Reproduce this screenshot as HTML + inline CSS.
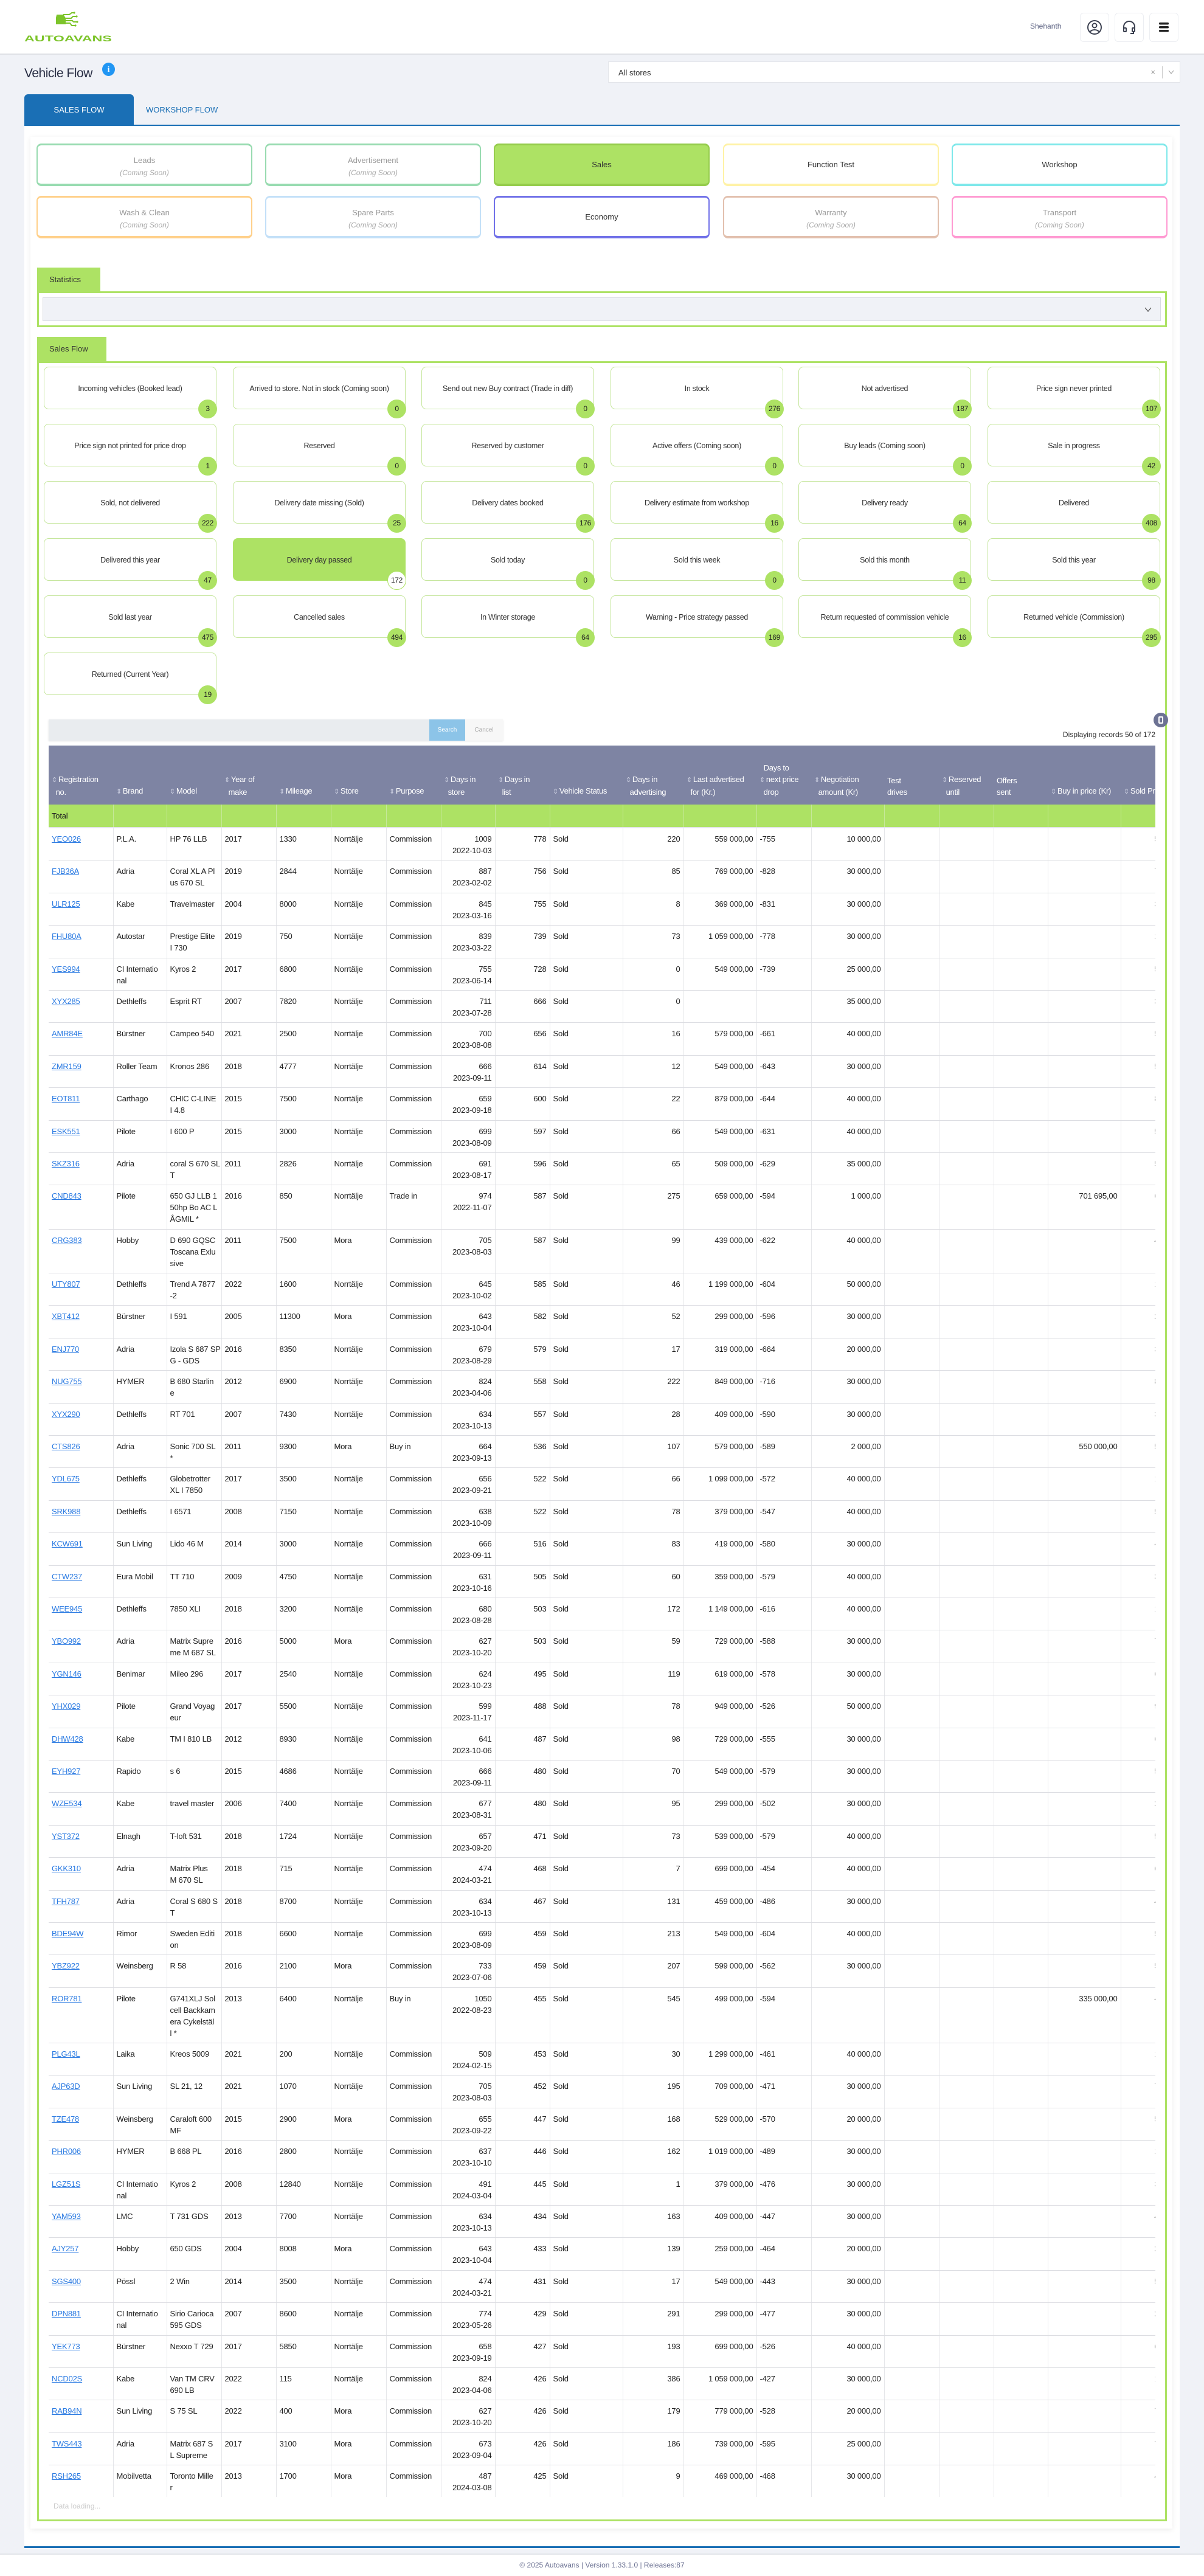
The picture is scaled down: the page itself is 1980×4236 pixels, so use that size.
<!DOCTYPE html>
<html><head><meta charset="utf-8">
<style>
*{box-sizing:border-box;margin:0;padding:0}
body{width:1980px;height:4236px;background:#f0f2f7;font-family:"Liberation Sans",sans-serif;color:#333;position:relative;overflow:hidden}
.abs{position:absolute}
#hdr{left:0;top:0;width:1980px;height:90px;background:#fff;border-bottom:2px solid #dfe1e6}
.ib{position:absolute;top:21px;width:48px;height:48px;border:1px solid #eceef2;border-radius:6px;background:#fff;display:flex;align-items:center;justify-content:center}
.card{position:absolute;width:355px;height:70px;border:2px solid;border-top-width:3px;border-bottom-width:4px;border-radius:8px;background:#fff;text-align:center;font-size:13px}
.card .t{margin-top:17px;color:#999}
.card .s{font-style:italic;color:#aaa;font-size:12px;margin-top:6px}
.card.one .t{margin-top:24px;color:#333}
.tile{position:absolute;width:284px;height:70px;border:1px solid #c5e69c;border-radius:8px;background:#fff;font-size:12.5px;color:#333;text-align:center;line-height:70px;letter-spacing:-0.3px}
.tile.on{background:#ade264;border-color:#ade264}
.bd{position:absolute;right:-2px;bottom:-16px;width:31px;height:31px;border-radius:50%;background:#ade264;font-size:12px;line-height:31px;text-align:center;color:#222}
.tile.on .bd{background:#fff;border:1px solid #ade264;line-height:29px}
table{border-collapse:collapse;table-layout:fixed;width:1890px;font-size:13px}
th{background:#7e84a3;color:#fff;font-weight:normal;text-align:left;vertical-align:bottom;padding:0 5px 11px;line-height:19px;height:97px;white-space:nowrap;overflow:hidden;letter-spacing:-0.3px}
th i{font-style:normal;color:#cdd0e2;font-size:11px;margin-right:2px}
td{padding:8px 5px 6.4px;line-height:19px;vertical-align:top;border-bottom:1px solid #dcdde2;border-right:1px solid #e6e7ea;white-space:nowrap;overflow:hidden;color:#222;letter-spacing:-0.2px}
td.r{text-align:right}
td a{color:#2a7ae2;text-decoration:underline}
tr.tot td{background:#ade264;height:35px;padding:9px 5px;border-bottom:2px solid #e3e4e8;border-right:1px solid #c6e89a}
td.l{padding-left:55px}
</style></head><body>

<div id="hdr" class="abs">
 <svg class="abs" style="left:90px;top:19px" width="42" height="28" viewBox="0 0 42 28"><g fill="none" stroke="#7cc42a" stroke-width="2"><path d="M4 6h10l3 5v9H3V10z" fill="#7cc42a"/><path d="M14 5h10l4-3h4M17 11h10l3-3h5M17 15h12l2 2h5M17 19h8l3 4h5"/></g><circle cx="32" cy="2" r="1.6" fill="#7cc42a"/><circle cx="36" cy="8" r="1.6" fill="#7cc42a"/><circle cx="37" cy="17" r="1.6" fill="#7cc42a"/><circle cx="34" cy="23" r="1.6" fill="#7cc42a"/></svg>
 <svg class="abs" style="left:40px;top:55px" width="146" height="15"><text x="0" y="13" font-family="Liberation Sans" font-weight="bold" font-size="14" fill="#7cc42a" textLength="144" lengthAdjust="spacingAndGlyphs">AUTOAVANS</text></svg>
 <div class="abs" style="left:1694px;top:36px;font-size:12px;color:#5a6080">Shehanth</div>
 <div class="ib" style="left:1776px"><svg width="26" height="26" viewBox="0 0 26 26" fill="none" stroke="#3b4050" stroke-width="2"><circle cx="13" cy="13" r="11"/><circle cx="13" cy="10" r="3.5"/><path d="M6 20c3-4 11-4 14 0"/></svg></div>
 <div class="ib" style="left:1833px"><svg width="26" height="26" viewBox="0 0 26 26" fill="none" stroke="#3b4050" stroke-width="2"><path d="M4 16v-4a9 9 0 0 1 18 0v4"/><rect x="4" y="14" width="4" height="6" rx="1"/><rect x="18" y="14" width="4" height="6" rx="1"/><path d="M20 20v3h-5"/></svg></div>
 <div class="ib" style="left:1890px"><svg width="20" height="18" viewBox="0 0 20 18" fill="#222"><rect x="2" y="1" width="16" height="3.5" rx="1.5"/><rect x="2" y="7" width="16" height="3.5" rx="1.5"/><rect x="2" y="13" width="16" height="3.5" rx="1.5"/></svg></div>
</div>

<div class="abs" style="left:40px;top:109px;font-size:21px;color:#2a2f45;letter-spacing:-0.5px">Vehicle Flow</div>
<div class="abs" style="left:168px;top:103px;width:21px;height:22px;border-radius:50%;background:#2196f3;color:#fff;font-size:13px;font-weight:bold;text-align:center;line-height:22px;font-family:'Liberation Serif',serif">i</div>
<div class="abs" style="left:1000px;top:101px;width:941px;height:35px;background:#fff;border:1px solid #e3e5ea;font-size:13px;color:#333;padding:10px 16px">All stores<span class="abs" style="right:40px;top:9px;color:#999">×</span><span class="abs" style="right:28px;top:7px;height:20px;border-left:1px solid #ccc"></span><svg class="abs" style="right:9px;top:13px" width="10" height="7" viewBox="0 0 10 7" fill="none" stroke="#aaa" stroke-width="1.2"><path d="M1 1l4 5 4-5"/></svg></div>

<div class="abs" style="left:40px;top:155px;width:180px;height:51px;background:#1a6fb5;border-radius:6px 6px 0 0;color:#fff;font-size:13px;text-align:center;line-height:51px">SALES FLOW</div>
<div class="abs" style="left:240px;top:155px;height:51px;color:#1a6fb5;font-size:13px;line-height:51px">WORKSHOP FLOW</div>

<div class="abs" style="left:40px;top:205px;width:1900px;height:3985px;background:#fff;border-top:2px solid #1a6fb5;border-bottom:3px solid #1a6fb5"></div>
<div class="abs" style="left:50px;top:225px;width:1878px;height:3933px;background:#fff;box-shadow:0 2px 8px rgba(0,0,0,0.08)"></div>

<div class="card" style="left:60px;top:236px;border-color:#98dbb0"><div class="t">Leads</div><div class="s">(Coming Soon)</div></div>
<div class="card" style="left:436px;top:236px;border-color:#98dbb0"><div class="t">Advertisement</div><div class="s">(Coming Soon)</div></div>
<div class="card one" style="left:812px;top:236px;border-color:#95cc4c;background:#ade264"><div class="t">Sales</div></div>
<div class="card one" style="left:1189px;top:236px;border-color:#fff2a6"><div class="t">Function Test</div></div>
<div class="card one" style="left:1565px;top:236px;border-color:#7ee8ea"><div class="t">Workshop</div></div>
<div class="card" style="left:60px;top:322px;border-color:#ffd08a"><div class="t">Wash &amp; Clean</div><div class="s">(Coming Soon)</div></div>
<div class="card" style="left:436px;top:322px;border-color:#c3e0f8"><div class="t">Spare Parts</div><div class="s">(Coming Soon)</div></div>
<div class="card one" style="left:812px;top:322px;border-color:#7070e8"><div class="t">Economy</div></div>
<div class="card" style="left:1189px;top:322px;border-color:#e2c0ae"><div class="t">Warranty</div><div class="s">(Coming Soon)</div></div>
<div class="card" style="left:1565px;top:322px;border-color:#ff9ad2"><div class="t">Transport</div><div class="s">(Coming Soon)</div></div>

<div class="abs" style="left:61px;top:440px;width:104px;height:40px;background:#ade264;font-size:13px;line-height:40px;padding-left:20px;color:#333">Statistics</div>
<div class="abs" style="left:61px;top:479px;width:1858px;height:59px;border:3px solid #ade264"></div>
<div class="abs" style="left:70px;top:489px;width:1839px;height:39px;background:#f0f2f7;border:1px solid #d8dbe2"><svg class="abs" style="right:14px;top:15px" width="12" height="8" viewBox="0 0 12 8" fill="none" stroke="#555" stroke-width="1.3"><path d="M1 1l5 6 5-6"/></svg></div>

<div class="abs" style="left:61px;top:554px;width:114px;height:41px;background:#ade264;font-size:13px;line-height:40px;padding-left:20px;color:#333">Sales Flow</div>
<div class="abs" style="left:61px;top:594px;width:1858px;height:3552px;border:3px solid #ade264"></div>

<div class="tile" style="left:72px;top:603px">Incoming vehicles (Booked lead)<div class="bd">3</div></div>
<div class="tile" style="left:383px;top:603px">Arrived to store. Not in stock (Coming soon)<div class="bd">0</div></div>
<div class="tile" style="left:693px;top:603px">Send out new Buy contract (Trade in diff)<div class="bd">0</div></div>
<div class="tile" style="left:1004px;top:603px">In stock<div class="bd">276</div></div>
<div class="tile" style="left:1313px;top:603px">Not advertised<div class="bd">187</div></div>
<div class="tile" style="left:1624px;top:603px">Price sign never printed<div class="bd">107</div></div>
<div class="tile" style="left:72px;top:697px">Price sign not printed for price drop<div class="bd">1</div></div>
<div class="tile" style="left:383px;top:697px">Reserved<div class="bd">0</div></div>
<div class="tile" style="left:693px;top:697px">Reserved by customer<div class="bd">0</div></div>
<div class="tile" style="left:1004px;top:697px">Active offers (Coming soon)<div class="bd">0</div></div>
<div class="tile" style="left:1313px;top:697px">Buy leads (Coming soon)<div class="bd">0</div></div>
<div class="tile" style="left:1624px;top:697px">Sale in progress<div class="bd">42</div></div>
<div class="tile" style="left:72px;top:791px">Sold, not delivered<div class="bd">222</div></div>
<div class="tile" style="left:383px;top:791px">Delivery date missing (Sold)<div class="bd">25</div></div>
<div class="tile" style="left:693px;top:791px">Delivery dates booked<div class="bd">176</div></div>
<div class="tile" style="left:1004px;top:791px">Delivery estimate from workshop<div class="bd">16</div></div>
<div class="tile" style="left:1313px;top:791px">Delivery ready<div class="bd">64</div></div>
<div class="tile" style="left:1624px;top:791px">Delivered<div class="bd">408</div></div>
<div class="tile" style="left:72px;top:885px">Delivered this year<div class="bd">47</div></div>
<div class="tile on" style="left:383px;top:885px">Delivery day passed<div class="bd">172</div></div>
<div class="tile" style="left:693px;top:885px">Sold today<div class="bd">0</div></div>
<div class="tile" style="left:1004px;top:885px">Sold this week<div class="bd">0</div></div>
<div class="tile" style="left:1313px;top:885px">Sold this month<div class="bd">11</div></div>
<div class="tile" style="left:1624px;top:885px">Sold this year<div class="bd">98</div></div>
<div class="tile" style="left:72px;top:979px">Sold last year<div class="bd">475</div></div>
<div class="tile" style="left:383px;top:979px">Cancelled sales<div class="bd">494</div></div>
<div class="tile" style="left:693px;top:979px">In Winter storage<div class="bd">64</div></div>
<div class="tile" style="left:1004px;top:979px">Warning - Price strategy passed<div class="bd">169</div></div>
<div class="tile" style="left:1313px;top:979px">Return requested of commission vehicle<div class="bd">16</div></div>
<div class="tile" style="left:1624px;top:979px">Returned vehicle (Commission)<div class="bd">295</div></div>
<div class="tile" style="left:72px;top:1073px">Returned (Current Year)<div class="bd">19</div></div>

<div class="abs" style="left:80px;top:1183px;width:747px;height:35px;background:#e9ecef;box-shadow:0 1px 3px rgba(0,0,0,0.1)"></div>
<div class="abs" style="left:706px;top:1183px;width:59px;height:35px;background:#8cc4e8;color:#fff;font-size:10px;text-align:center;line-height:35px">Search</div>
<div class="abs" style="left:765px;top:1183px;width:62px;height:35px;background:#f7f7f7;color:#aaa;font-size:10px;text-align:center;line-height:35px">Cancel</div>
<div class="abs" style="left:1897px;top:1172px;width:24px;height:24px;border-radius:50%;background:#6c7293"><div class="abs" style="left:8px;top:6px;width:8px;height:12px;border:2px solid #fff;border-radius:2px"></div></div>
<div class="abs" style="left:1600px;top:1201px;width:300px;text-align:right;font-size:12px;color:#333">Displaying records 50 of 172</div>

<div class="abs" style="left:80px;top:1226px;width:1820px;height:2880px;overflow:hidden">
<table>
<colgroup><col style="width:106px"><col style="width:88px"><col style="width:90px"><col style="width:90px"><col style="width:90px"><col style="width:91px"><col style="width:90px"><col style="width:89px"><col style="width:90px"><col style="width:120px"><col style="width:100px"><col style="width:120px"><col style="width:90px"><col style="width:120px"><col style="width:90px"><col style="width:90px"><col style="width:89px"><col style="width:120px"><col style="width:127px"></colgroup>
<tr><th><i>⇕</i>Registration<br>&nbsp;&nbsp;no.</th><th><i>⇕</i>Brand</th><th><i>⇕</i>Model</th><th><i>⇕</i>Year of<br>&nbsp;&nbsp;make</th><th><i>⇕</i>Mileage</th><th><i>⇕</i>Store</th><th><i>⇕</i>Purpose</th><th><i>⇕</i>Days in<br>&nbsp;&nbsp;store</th><th><i>⇕</i>Days in<br>&nbsp;&nbsp;list</th><th><i>⇕</i>Vehicle Status</th><th><i>⇕</i>Days in<br>&nbsp;&nbsp;advertising</th><th><i>⇕</i>Last advertised<br>&nbsp;&nbsp;for (Kr.)</th><th>&nbsp;&nbsp;Days to<br><i>⇕</i>next price<br>&nbsp;&nbsp;drop</th><th><i>⇕</i>Negotiation<br>&nbsp;&nbsp;amount (Kr)</th><th>Test<br>drives</th><th><i>⇕</i>Reserved<br>&nbsp;&nbsp;until</th><th>Offers<br>sent</th><th><i>⇕</i>Buy in price (Kr)</th><th><i>⇕</i>Sold Price (Kr)</th></tr>
<tr class="tot"><td>Total</td><td></td><td></td><td></td><td></td><td></td><td></td><td></td><td></td><td></td><td></td><td></td><td></td><td></td><td></td><td></td><td></td><td></td><td></td></tr>
<tr><td><a>YEO026</a></td><td>P.L.A.</td><td>HP 76 LLB</td><td>2017</td><td>1330</td><td>Norrtälje</td><td>Commission</td><td class="r">1009<br>2022-10-03</td><td class="r">778</td><td>Sold</td><td class="r">220</td><td class="r">559 000,00</td><td>-755</td><td class="r">10 000,00</td><td></td><td></td><td></td><td></td><td class="l">559 000,00</td></tr>
<tr><td><a>FJB36A</a></td><td>Adria</td><td>Coral XL A Pl<br>us 670 SL</td><td>2019</td><td>2844</td><td>Norrtälje</td><td>Commission</td><td class="r">887<br>2023-02-02</td><td class="r">756</td><td>Sold</td><td class="r">85</td><td class="r">769 000,00</td><td>-828</td><td class="r">30 000,00</td><td></td><td></td><td></td><td></td><td class="l">769 000,00</td></tr>
<tr><td><a>ULR125</a></td><td>Kabe</td><td>Travelmaster</td><td>2004</td><td>8000</td><td>Norrtälje</td><td>Commission</td><td class="r">845<br>2023-03-16</td><td class="r">755</td><td>Sold</td><td class="r">8</td><td class="r">369 000,00</td><td>-831</td><td class="r">30 000,00</td><td></td><td></td><td></td><td></td><td class="l">369 000,00</td></tr>
<tr><td><a>FHU80A</a></td><td>Autostar</td><td>Prestige Elite<br>I 730</td><td>2019</td><td>750</td><td>Norrtälje</td><td>Commission</td><td class="r">839<br>2023-03-22</td><td class="r">739</td><td>Sold</td><td class="r">73</td><td class="r">1 059 000,00</td><td>-778</td><td class="r">30 000,00</td><td></td><td></td><td></td><td></td><td class="l">10 59 000,00</td></tr>
<tr><td><a>YES994</a></td><td>CI Internatio<br>nal</td><td>Kyros 2</td><td>2017</td><td>6800</td><td>Norrtälje</td><td>Commission</td><td class="r">755<br>2023-06-14</td><td class="r">728</td><td>Sold</td><td class="r">0</td><td class="r">549 000,00</td><td>-739</td><td class="r">25 000,00</td><td></td><td></td><td></td><td></td><td class="l">549 000,00</td></tr>
<tr><td><a>XYX285</a></td><td>Dethleffs</td><td>Esprit RT</td><td>2007</td><td>7820</td><td>Norrtälje</td><td>Commission</td><td class="r">711<br>2023-07-28</td><td class="r">666</td><td>Sold</td><td class="r">0</td><td class="r"></td><td></td><td class="r">35 000,00</td><td></td><td></td><td></td><td></td><td class="l">329 000,00</td></tr>
<tr><td><a>AMR84E</a></td><td>Bürstner</td><td>Campeo 540</td><td>2021</td><td>2500</td><td>Norrtälje</td><td>Commission</td><td class="r">700<br>2023-08-08</td><td class="r">656</td><td>Sold</td><td class="r">16</td><td class="r">579 000,00</td><td>-661</td><td class="r">40 000,00</td><td></td><td></td><td></td><td></td><td class="l">579 000,00</td></tr>
<tr><td><a>ZMR159</a></td><td>Roller Team</td><td>Kronos 286</td><td>2018</td><td>4777</td><td>Norrtälje</td><td>Commission</td><td class="r">666<br>2023-09-11</td><td class="r">614</td><td>Sold</td><td class="r">12</td><td class="r">549 000,00</td><td>-643</td><td class="r">30 000,00</td><td></td><td></td><td></td><td></td><td class="l">549 000,00</td></tr>
<tr><td><a>EOT811</a></td><td>Carthago</td><td>CHIC C-LINE<br>I 4.8</td><td>2015</td><td>7500</td><td>Norrtälje</td><td>Commission</td><td class="r">659<br>2023-09-18</td><td class="r">600</td><td>Sold</td><td class="r">22</td><td class="r">879 000,00</td><td>-644</td><td class="r">40 000,00</td><td></td><td></td><td></td><td></td><td class="l">879 000,00</td></tr>
<tr><td><a>ESK551</a></td><td>Pilote</td><td>I 600 P</td><td>2015</td><td>3000</td><td>Norrtälje</td><td>Commission</td><td class="r">699<br>2023-08-09</td><td class="r">597</td><td>Sold</td><td class="r">66</td><td class="r">549 000,00</td><td>-631</td><td class="r">40 000,00</td><td></td><td></td><td></td><td></td><td class="l">549 000,00</td></tr>
<tr><td><a>SKZ316</a></td><td>Adria</td><td>coral S 670 SL<br>T</td><td>2011</td><td>2826</td><td>Norrtälje</td><td>Commission</td><td class="r">691<br>2023-08-17</td><td class="r">596</td><td>Sold</td><td class="r">65</td><td class="r">509 000,00</td><td>-629</td><td class="r">35 000,00</td><td></td><td></td><td></td><td></td><td class="l">509 000,00</td></tr>
<tr><td><a>CND843</a></td><td>Pilote</td><td>650 GJ LLB 1<br>50hp Bo AC L<br>ÅGMIL *</td><td>2016</td><td>850</td><td>Norrtälje</td><td>Trade in</td><td class="r">974<br>2022-11-07</td><td class="r">587</td><td>Sold</td><td class="r">275</td><td class="r">659 000,00</td><td>-594</td><td class="r">1 000,00</td><td></td><td></td><td></td><td class="r">701 695,00</td><td class="l">659 000,00</td></tr>
<tr><td><a>CRG383</a></td><td>Hobby</td><td>D 690 GQSC<br>Toscana Exlu<br>sive</td><td>2011</td><td>7500</td><td>Mora</td><td>Commission</td><td class="r">705<br>2023-08-03</td><td class="r">587</td><td>Sold</td><td class="r">99</td><td class="r">439 000,00</td><td>-622</td><td class="r">40 000,00</td><td></td><td></td><td></td><td></td><td class="l">439 000,00</td></tr>
<tr><td><a>UTY807</a></td><td>Dethleffs</td><td>Trend A 7877<br>-2</td><td>2022</td><td>1600</td><td>Norrtälje</td><td>Commission</td><td class="r">645<br>2023-10-02</td><td class="r">585</td><td>Sold</td><td class="r">46</td><td class="r">1 199 000,00</td><td>-604</td><td class="r">50 000,00</td><td></td><td></td><td></td><td></td><td class="l">11 99 000,00</td></tr>
<tr><td><a>XBT412</a></td><td>Bürstner</td><td>I 591</td><td>2005</td><td>11300</td><td>Mora</td><td>Commission</td><td class="r">643<br>2023-10-04</td><td class="r">582</td><td>Sold</td><td class="r">52</td><td class="r">299 000,00</td><td>-596</td><td class="r">30 000,00</td><td></td><td></td><td></td><td></td><td class="l">299 000,00</td></tr>
<tr><td><a>ENJ770</a></td><td>Adria</td><td>Izola S 687 SP<br>G - GDS</td><td>2016</td><td>8350</td><td>Norrtälje</td><td>Commission</td><td class="r">679<br>2023-08-29</td><td class="r">579</td><td>Sold</td><td class="r">17</td><td class="r">319 000,00</td><td>-664</td><td class="r">20 000,00</td><td></td><td></td><td></td><td></td><td class="l">319 000,00</td></tr>
<tr><td><a>NUG755</a></td><td>HYMER</td><td>B 680 Starlin<br>e</td><td>2012</td><td>6900</td><td>Norrtälje</td><td>Commission</td><td class="r">824<br>2023-04-06</td><td class="r">558</td><td>Sold</td><td class="r">222</td><td class="r">849 000,00</td><td>-716</td><td class="r">30 000,00</td><td></td><td></td><td></td><td></td><td class="l">849 000,00</td></tr>
<tr><td><a>XYX290</a></td><td>Dethleffs</td><td>RT 701</td><td>2007</td><td>7430</td><td>Norrtälje</td><td>Commission</td><td class="r">634<br>2023-10-13</td><td class="r">557</td><td>Sold</td><td class="r">28</td><td class="r">409 000,00</td><td>-590</td><td class="r">30 000,00</td><td></td><td></td><td></td><td></td><td class="l">379 000,00</td></tr>
<tr><td><a>CTS826</a></td><td>Adria</td><td>Sonic 700 SL<br>*</td><td>2011</td><td>9300</td><td>Mora</td><td>Buy in</td><td class="r">664<br>2023-09-13</td><td class="r">536</td><td>Sold</td><td class="r">107</td><td class="r">579 000,00</td><td>-589</td><td class="r">2 000,00</td><td></td><td></td><td></td><td class="r">550 000,00</td><td class="l">579 000,00</td></tr>
<tr><td><a>YDL675</a></td><td>Dethleffs</td><td>Globetrotter<br>XL I 7850</td><td>2017</td><td>3500</td><td>Norrtälje</td><td>Commission</td><td class="r">656<br>2023-09-21</td><td class="r">522</td><td>Sold</td><td class="r">66</td><td class="r">1 099 000,00</td><td>-572</td><td class="r">40 000,00</td><td></td><td></td><td></td><td></td><td class="l">10 99 000,00</td></tr>
<tr><td><a>SRK988</a></td><td>Dethleffs</td><td>I 6571</td><td>2008</td><td>7150</td><td>Norrtälje</td><td>Commission</td><td class="r">638<br>2023-10-09</td><td class="r">522</td><td>Sold</td><td class="r">78</td><td class="r">379 000,00</td><td>-547</td><td class="r">40 000,00</td><td></td><td></td><td></td><td></td><td class="l">579 000,00</td></tr>
<tr><td><a>KCW691</a></td><td>Sun Living</td><td>Lido 46 M</td><td>2014</td><td>3000</td><td>Norrtälje</td><td>Commission</td><td class="r">666<br>2023-09-11</td><td class="r">516</td><td>Sold</td><td class="r">83</td><td class="r">419 000,00</td><td>-580</td><td class="r">30 000,00</td><td></td><td></td><td></td><td></td><td class="l">419 000,00</td></tr>
<tr><td><a>CTW237</a></td><td>Eura Mobil</td><td>TT 710</td><td>2009</td><td>4750</td><td>Norrtälje</td><td>Commission</td><td class="r">631<br>2023-10-16</td><td class="r">505</td><td>Sold</td><td class="r">60</td><td class="r">359 000,00</td><td>-579</td><td class="r">40 000,00</td><td></td><td></td><td></td><td></td><td class="l">359 000,00</td></tr>
<tr><td><a>WEE945</a></td><td>Dethleffs</td><td>7850 XLI</td><td>2018</td><td>3200</td><td>Norrtälje</td><td>Commission</td><td class="r">680<br>2023-08-28</td><td class="r">503</td><td>Sold</td><td class="r">172</td><td class="r">1 149 000,00</td><td>-616</td><td class="r">40 000,00</td><td></td><td></td><td></td><td></td><td class="l">11 49 000,00</td></tr>
<tr><td><a>YBO992</a></td><td>Adria</td><td>Matrix Supre<br>me M 687 SL</td><td>2016</td><td>5000</td><td>Mora</td><td>Commission</td><td class="r">627<br>2023-10-20</td><td class="r">503</td><td>Sold</td><td class="r">59</td><td class="r">729 000,00</td><td>-588</td><td class="r">30 000,00</td><td></td><td></td><td></td><td></td><td class="l">729 000,00</td></tr>
<tr><td><a>YGN146</a></td><td>Benimar</td><td>Mileo 296</td><td>2017</td><td>2540</td><td>Norrtälje</td><td>Commission</td><td class="r">624<br>2023-10-23</td><td class="r">495</td><td>Sold</td><td class="r">119</td><td class="r">619 000,00</td><td>-578</td><td class="r">30 000,00</td><td></td><td></td><td></td><td></td><td class="l">619 000,00</td></tr>
<tr><td><a>YHX029</a></td><td>Pilote</td><td>Grand Voyag<br>eur</td><td>2017</td><td>5500</td><td>Norrtälje</td><td>Commission</td><td class="r">599<br>2023-11-17</td><td class="r">488</td><td>Sold</td><td class="r">78</td><td class="r">949 000,00</td><td>-526</td><td class="r">50 000,00</td><td></td><td></td><td></td><td></td><td class="l">949 000,00</td></tr>
<tr><td><a>DHW428</a></td><td>Kabe</td><td>TM I 810 LB</td><td>2012</td><td>8930</td><td>Norrtälje</td><td>Commission</td><td class="r">641<br>2023-10-06</td><td class="r">487</td><td>Sold</td><td class="r">98</td><td class="r">729 000,00</td><td>-555</td><td class="r">30 000,00</td><td></td><td></td><td></td><td></td><td class="l">629 000,00</td></tr>
<tr><td><a>EYH927</a></td><td>Rapido</td><td>s 6</td><td>2015</td><td>4686</td><td>Norrtälje</td><td>Commission</td><td class="r">666<br>2023-09-11</td><td class="r">480</td><td>Sold</td><td class="r">70</td><td class="r">549 000,00</td><td>-579</td><td class="r">30 000,00</td><td></td><td></td><td></td><td></td><td class="l">549 000,00</td></tr>
<tr><td><a>WZE534</a></td><td>Kabe</td><td>travel master</td><td>2006</td><td>7400</td><td>Norrtälje</td><td>Commission</td><td class="r">677<br>2023-08-31</td><td class="r">480</td><td>Sold</td><td class="r">95</td><td class="r">299 000,00</td><td>-502</td><td class="r">30 000,00</td><td></td><td></td><td></td><td></td><td class="l">299 000,00</td></tr>
<tr><td><a>YST372</a></td><td>Elnagh</td><td>T-loft 531</td><td>2018</td><td>1724</td><td>Norrtälje</td><td>Commission</td><td class="r">657<br>2023-09-20</td><td class="r">471</td><td>Sold</td><td class="r">73</td><td class="r">539 000,00</td><td>-579</td><td class="r">40 000,00</td><td></td><td></td><td></td><td></td><td class="l">539 000,00</td></tr>
<tr><td><a>GKK310</a></td><td>Adria</td><td>Matrix Plus<br>M 670 SL</td><td>2018</td><td>715</td><td>Norrtälje</td><td>Commission</td><td class="r">474<br>2024-03-21</td><td class="r">468</td><td>Sold</td><td class="r">7</td><td class="r">699 000,00</td><td>-454</td><td class="r">40 000,00</td><td></td><td></td><td></td><td></td><td class="l">699 000,00</td></tr>
<tr><td><a>TFH787</a></td><td>Adria</td><td>Coral S 680 S<br>T</td><td>2018</td><td>8700</td><td>Norrtälje</td><td>Commission</td><td class="r">634<br>2023-10-13</td><td class="r">467</td><td>Sold</td><td class="r">131</td><td class="r">459 000,00</td><td>-486</td><td class="r">30 000,00</td><td></td><td></td><td></td><td></td><td class="l">459 000,00</td></tr>
<tr><td><a>BDE94W</a></td><td>Rimor</td><td>Sweden Editi<br>on</td><td>2018</td><td>6600</td><td>Norrtälje</td><td>Commission</td><td class="r">699<br>2023-08-09</td><td class="r">459</td><td>Sold</td><td class="r">213</td><td class="r">549 000,00</td><td>-604</td><td class="r">40 000,00</td><td></td><td></td><td></td><td></td><td class="l">549 000,00</td></tr>
<tr><td><a>YBZ922</a></td><td>Weinsberg</td><td>R 58</td><td>2016</td><td>2100</td><td>Mora</td><td>Commission</td><td class="r">733<br>2023-07-06</td><td class="r">459</td><td>Sold</td><td class="r">207</td><td class="r">599 000,00</td><td>-562</td><td class="r">30 000,00</td><td></td><td></td><td></td><td></td><td class="l">599 000,00</td></tr>
<tr><td><a>ROR781</a></td><td>Pilote</td><td>G741XLJ Sol<br>cell Backkam<br>era Cykelstäl<br>l *</td><td>2013</td><td>6400</td><td>Norrtälje</td><td>Buy in</td><td class="r">1050<br>2022-08-23</td><td class="r">455</td><td>Sold</td><td class="r">545</td><td class="r">499 000,00</td><td>-594</td><td class="r"></td><td></td><td></td><td></td><td class="r">335 000,00</td><td class="l">499 000,00</td></tr>
<tr><td><a>PLG43L</a></td><td>Laika</td><td>Kreos 5009</td><td>2021</td><td>200</td><td>Norrtälje</td><td>Commission</td><td class="r">509<br>2024-02-15</td><td class="r">453</td><td>Sold</td><td class="r">30</td><td class="r">1 299 000,00</td><td>-461</td><td class="r">40 000,00</td><td></td><td></td><td></td><td></td><td class="l">12 99 000,00</td></tr>
<tr><td><a>AJP63D</a></td><td>Sun Living</td><td>SL 21, 12</td><td>2021</td><td>1070</td><td>Norrtälje</td><td>Commission</td><td class="r">705<br>2023-08-03</td><td class="r">452</td><td>Sold</td><td class="r">195</td><td class="r">709 000,00</td><td>-471</td><td class="r">30 000,00</td><td></td><td></td><td></td><td></td><td class="l">709 000,00</td></tr>
<tr><td><a>TZE478</a></td><td>Weinsberg</td><td>Caraloft 600<br>MF</td><td>2015</td><td>2900</td><td>Mora</td><td>Commission</td><td class="r">655<br>2023-09-22</td><td class="r">447</td><td>Sold</td><td class="r">168</td><td class="r">529 000,00</td><td>-570</td><td class="r">20 000,00</td><td></td><td></td><td></td><td></td><td class="l">529 000,00</td></tr>
<tr><td><a>PHR006</a></td><td>HYMER</td><td>B 668 PL</td><td>2016</td><td>2800</td><td>Norrtälje</td><td>Commission</td><td class="r">637<br>2023-10-10</td><td class="r">446</td><td>Sold</td><td class="r">162</td><td class="r">1 019 000,00</td><td>-489</td><td class="r">30 000,00</td><td></td><td></td><td></td><td></td><td class="l">10 19 000,00</td></tr>
<tr><td><a>LGZ51S</a></td><td>CI Internatio<br>nal</td><td>Kyros 2</td><td>2008</td><td>12840</td><td>Norrtälje</td><td>Commission</td><td class="r">491<br>2024-03-04</td><td class="r">445</td><td>Sold</td><td class="r">1</td><td class="r">379 000,00</td><td>-476</td><td class="r">30 000,00</td><td></td><td></td><td></td><td></td><td class="l">379 000,00</td></tr>
<tr><td><a>YAM593</a></td><td>LMC</td><td>T 731 GDS</td><td>2013</td><td>7700</td><td>Norrtälje</td><td>Commission</td><td class="r">634<br>2023-10-13</td><td class="r">434</td><td>Sold</td><td class="r">163</td><td class="r">409 000,00</td><td>-447</td><td class="r">30 000,00</td><td></td><td></td><td></td><td></td><td class="l">409 000,00</td></tr>
<tr><td><a>AJY257</a></td><td>Hobby</td><td>650 GDS</td><td>2004</td><td>8008</td><td>Mora</td><td>Commission</td><td class="r">643<br>2023-10-04</td><td class="r">433</td><td>Sold</td><td class="r">139</td><td class="r">259 000,00</td><td>-464</td><td class="r">20 000,00</td><td></td><td></td><td></td><td></td><td class="l">259 000,00</td></tr>
<tr><td><a>SGS400</a></td><td>Pössl</td><td>2 Win</td><td>2014</td><td>3500</td><td>Norrtälje</td><td>Commission</td><td class="r">474<br>2024-03-21</td><td class="r">431</td><td>Sold</td><td class="r">17</td><td class="r">549 000,00</td><td>-443</td><td class="r">30 000,00</td><td></td><td></td><td></td><td></td><td class="l">549 000,00</td></tr>
<tr><td><a>DPN881</a></td><td>CI Internatio<br>nal</td><td>Sirio Carioca<br>595 GDS</td><td>2007</td><td>8600</td><td>Norrtälje</td><td>Commission</td><td class="r">774<br>2023-05-26</td><td class="r">429</td><td>Sold</td><td class="r">291</td><td class="r">299 000,00</td><td>-477</td><td class="r">30 000,00</td><td></td><td></td><td></td><td></td><td class="l">299 000,00</td></tr>
<tr><td><a>YEK773</a></td><td>Bürstner</td><td>Nexxo T 729</td><td>2017</td><td>5850</td><td>Norrtälje</td><td>Commission</td><td class="r">658<br>2023-09-19</td><td class="r">427</td><td>Sold</td><td class="r">193</td><td class="r">699 000,00</td><td>-526</td><td class="r">40 000,00</td><td></td><td></td><td></td><td></td><td class="l">699 000,00</td></tr>
<tr><td><a>NCD02S</a></td><td>Kabe</td><td>Van TM CRV<br>690 LB</td><td>2022</td><td>115</td><td>Norrtälje</td><td>Commission</td><td class="r">824<br>2023-04-06</td><td class="r">426</td><td>Sold</td><td class="r">386</td><td class="r">1 059 000,00</td><td>-427</td><td class="r">30 000,00</td><td></td><td></td><td></td><td></td><td class="l">10 59 000,00</td></tr>
<tr><td><a>RAB94N</a></td><td>Sun Living</td><td>S 75 SL</td><td>2022</td><td>400</td><td>Mora</td><td>Commission</td><td class="r">627<br>2023-10-20</td><td class="r">426</td><td>Sold</td><td class="r">179</td><td class="r">779 000,00</td><td>-528</td><td class="r">20 000,00</td><td></td><td></td><td></td><td></td><td class="l">779 000,00</td></tr>
<tr><td><a>TWS443</a></td><td>Adria</td><td>Matrix 687 S<br>L Supreme</td><td>2017</td><td>3100</td><td>Mora</td><td>Commission</td><td class="r">673<br>2023-09-04</td><td class="r">426</td><td>Sold</td><td class="r">186</td><td class="r">739 000,00</td><td>-595</td><td class="r">25 000,00</td><td></td><td></td><td></td><td></td><td class="l">739 000,00</td></tr>
<tr><td><a>RSH265</a></td><td>Mobilvetta</td><td>Toronto Mille<br>r</td><td>2013</td><td>1700</td><td>Mora</td><td>Commission</td><td class="r">487<br>2024-03-08</td><td class="r">425</td><td>Sold</td><td class="r">9</td><td class="r">469 000,00</td><td>-468</td><td class="r">30 000,00</td><td></td><td></td><td></td><td></td><td class="l">469 000,00</td></tr>
</table>
</div>
<div class="abs" style="left:88px;top:4114px;font-size:12px;color:#ccc">Data loading...</div>

<div class="abs" style="left:0;top:4199px;width:1980px;height:37px;background:#fff;border-top:2px solid #e3e5ea"></div>
<div class="abs" style="left:0;top:4211px;width:1980px;text-align:center;font-size:12px;color:#6c7293">© 2025 Autoavans | Version 1.33.1.0 | Releases:87</div>
</body></html>
